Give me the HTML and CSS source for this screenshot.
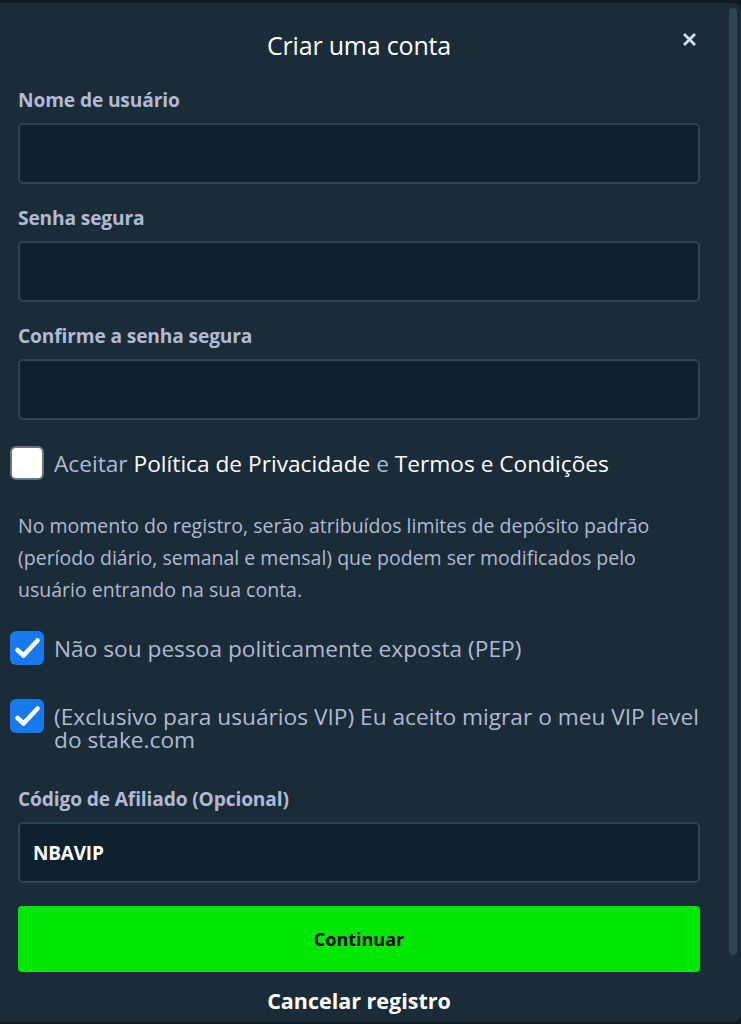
FILE: index.html
```html
<!DOCTYPE html>
<html lang="pt-BR">
<head>
<meta charset="utf-8">
<title>Criar uma conta</title>
<link rel="stylesheet" href="styles.css">
</head>
<body>
<div class="modal">
  <div class="main">
    <header class="head">
      <h1 class="title">Criar uma conta</h1>
      <button class="close" aria-label="Fechar">
        <svg width="13" height="13" viewBox="0 0 13 13"><path d="M2 2 L11 11 M11 2 L2 11" stroke="#d5dceb" stroke-width="2.8" stroke-linecap="square"/></svg>
      </button>
    </header>

    <div class="field">
      <label class="label">Nome de usuário</label>
      <div class="input"></div>
    </div>
    <div class="field">
      <label class="label">Senha segura</label>
      <div class="input"></div>
    </div>
    <div class="field field-last">
      <label class="label">Confirme a senha segura</label>
      <div class="input"></div>
    </div>

    <div class="check-row check-terms">
      <span class="box box-empty"></span>
      <span class="check-text">Aceitar <a class="link">Política de Privacidade</a> e <a class="link">Termos e Condições</a></span>
    </div>

    <p class="note">No momento do registro, serão atribuídos limites de depósito padrão (período diário, semanal e mensal) que podem ser modificados pelo usuário entrando na sua conta.</p>

    <div class="check-row check-pep">
      <span class="box box-on"><svg width="34" height="34" viewBox="0 0 34 34"><path d="M7.5 19 L13.5 24.5 L27.5 9.5" fill="none" stroke="#fff" stroke-width="4.6" stroke-linecap="round" stroke-linejoin="round"/></svg></span>
      <span class="check-text">Não sou pessoa politicamente exposta (PEP)</span>
    </div>
    <div class="check-row check-vip">
      <span class="box box-on"><svg width="34" height="34" viewBox="0 0 34 34"><path d="M7.5 19 L13.5 24.5 L27.5 9.5" fill="none" stroke="#fff" stroke-width="4.6" stroke-linecap="round" stroke-linejoin="round"/></svg></span>
      <span class="check-text">(Exclusivo para usuários VIP) Eu aceito migrar o meu VIP level do stake.com</span>
    </div>

    <div class="field field-aff">
      <label class="label">Código de Afiliado (Opcional)</label>
      <div class="input input-filled">NBAVIP</div>
    </div>

    <button class="btn-continue">Continuar</button>
    <div class="cancel">Cancelar registro</div>
  </div>
  <div class="scrollbar"></div>
</div>
</body>
</html>
```

FILE: styles.css
```css
html, body {
  margin: 0;
  padding: 0;
}
body {
  background: #0f1923;
  width: 741px;
  height: 1024px;
  overflow: hidden;
}
.modal {
  margin-top: 3px;
  height: 1019px;
  background: #1a2c38;
  border-radius: 0 8px 8px 0;
  display: flex;
  box-sizing: border-box;
}
.main {
  width: 682px;
  margin-left: 18px;
  display: flex;
  flex-direction: column;
}
.scrollbar {
  width: 8px;
  height: 947px;
  margin: 5px 4px 0 29px;
  background: #2f4553;
  border-radius: 4px;
}
.head {
  height: 86px;
  display: flex;
  align-items: center;
  justify-content: center;
  position: relative;
}
.title {
  margin: 0;
  font-family: "Open Sans", sans-serif;
  font-weight: 400;
  font-size: 25px;
  color: #ffffff;
  line-height: 30px;
  margin-top: -2px;
  letter-spacing: -0.2px;
}
.close {
  position: absolute;
  right: 4px;
  top: 30px;
  background: none;
  border: 0;
  padding: 0;
  width: 13px;
  height: 13px;
  display: flex;
}
.field {
  display: flex;
  flex-direction: column;
  margin-bottom: 23px;
}
.field-last {
  margin-bottom: 26px;
}
.label {
  font-family: "Open Sans", sans-serif;
  font-weight: 700;
  font-size: 19.2px;
  line-height: 22px;
  color: #b1bad3;
  margin-bottom: 12px;
  letter-spacing: -0.15px;
}
.input {
  height: 61px;
  box-sizing: border-box;
  background: #0f212e;
  border: 2px solid #2f4553;
  border-radius: 5px;
}
.input-filled {
  display: flex;
  align-items: center;
  padding-left: 13px;
  font-family: "Open Sans", sans-serif;
  font-weight: 700;
  font-size: 19px;
  color: #ffffff;
  letter-spacing: -0.2px;
}
.check-row {
  display: flex;
  align-items: flex-start;
  margin-left: -8px;
}
.box {
  flex: none;
  width: 34px;
  height: 34px;
  box-sizing: border-box;
  border-radius: 6px;
  margin-right: 10px;
  display: flex;
  align-items: center;
  justify-content: center;
}
.box-empty {
  background: #ffffff;
  border: 2px solid #6b7280;
}
.box-on {
  background: #1779ee;
}
.check-text {
  font-family: "Open Sans", sans-serif;
  font-size: 22.7px;
  line-height: 23px;
  color: #b1bad3;
  padding-top: 6px;
}
.link {
  color: #ffffff;
}
.check-terms {
  margin-bottom: 30px;
}
.note {
  margin: 0 0 25px 0;
  font-family: "Open Sans", sans-serif;
  font-size: 19.5px;
  line-height: 32px;
  color: #b1bad3;
}
.check-pep {
  margin-bottom: 34px;
}
.check-vip {
  margin-bottom: 37px;
}
.field-aff {
  margin-bottom: 23px;
}
.btn-continue {
  height: 66px;
  border: 0;
  border-radius: 4px;
  background: #00e701;
  font-family: "Open Sans", sans-serif;
  font-weight: 700;
  font-size: 18px;
  color: #05080a;
  padding: 0;
  margin-bottom: 17px;
}
.cancel {
  font-family: "Open Sans", sans-serif;
  font-weight: 700;
  font-size: 21.5px;
  line-height: 24px;
  color: #ffffff;
  text-align: center;
}
```
